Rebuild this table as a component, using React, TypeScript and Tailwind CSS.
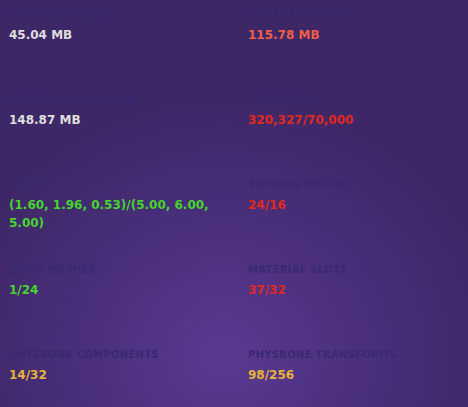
const stats = [
  { label: "Download Size", value: "45.04 MB", color: "text-[#dedede]" },
  { label: "Texture Memory", value: "115.78 MB", color: "text-[#ee5f48]" },
  { label: "Uncompressed Size", value: "148.87 MB", color: "text-[#dedede]" },
  { label: "Triangles", value: "320,327/70,000", color: "text-[#e0281e]" },
  { label: "Bounds", value: "(1.60, 1.96, 0.53)/(5.00, 6.00, 5.00)", color: "text-[#46d42c]" },
  { label: "Skinned Meshes", value: "24/16", color: "text-[#e0281e]" },
  { label: "Basic Meshes", value: "1/24", color: "text-[#46d42c]" },
  { label: "Material Slots", value: "37/32", color: "text-[#e0281e]" },
  { label: "PhysBone Components", value: "14/32", color: "text-[#e6b23a]" },
  { label: "PhysBone Transforms", value: "98/256", color: "text-[#e6b23a]" },
]

export default function App() {
  return (
    <div
      className="w-[468px] h-[407px] overflow-hidden bg-[radial-gradient(ellipse_280px_260px_at_225px_355px,#5a3a92_0%,#4a2f7c_50%,#3e2766_100%)]"
      style={{ fontFamily: '"DejaVu Sans", Verdana, sans-serif' }}
    >
      <div className="grid grid-cols-[239px_1fr] pl-[9px]">
        {stats.map((s) => (
          <div key={s.label} className="h-[85px] pt-[8px] pr-[24px]">
            <div className="text-[10px] leading-[14px] font-bold uppercase tracking-[0.3px] text-[#3a2970]">
              {s.label}
            </div>
            <div className={`mt-[4px] text-[12px] leading-[18px] font-bold ${s.color}`}>
              {s.value}
            </div>
          </div>
        ))}
      </div>
    </div>
  )
}
